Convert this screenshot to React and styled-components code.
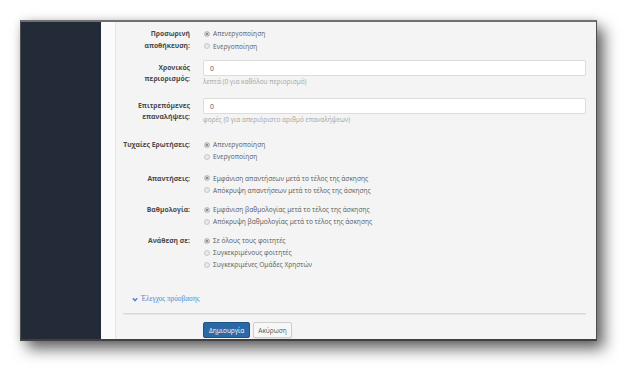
import React from 'react';
import styled, { createGlobalStyle } from 'styled-components';

const GlobalStyle = createGlobalStyle`
  html, body {
    margin: 0;
    padding: 0;
    background: #ffffff;
  }
  body {
    font-family: 'Open Sans', 'Noto Sans', sans-serif;
  }
`;

const Page = styled.div`
  width: 638px;
  height: 382px;
  padding: 20px 0 0 20px;
  box-sizing: border-box;
  overflow: hidden;
`;

const Frame = styled.div`
  width: 577px;
  height: 321px;
  box-sizing: border-box;
  display: flex;
  border: 1px solid #4e4e4e;
  border-top: 2px solid #707070;
  border-bottom: 2px solid #404040;
  box-shadow: 7px 8px 14px rgba(0, 0, 0, 0.6), 0 0 8px rgba(0, 0, 0, 0.12);
  overflow: hidden;
`;

const Sidebar = styled.aside`
  flex: 0 0 80px;
  background: #232b39;
`;

const Gutter = styled.div`
  flex: 0 0 14px;
  background: #fbfbfb;
  border-right: 1px solid #e6e6e6;
`;

const Content = styled.main`
  flex: 1;
  background: #f4f4f4;
  padding: 5.5px 10px 0 0;
  box-sizing: border-box;
`;

const Row = styled.div`
  display: grid;
  grid-template-columns: 74px 1fr;
  column-gap: 13px;
  margin-bottom: ${(p) => p.$gap}px;
`;

const Label = styled.div`
  text-align: right;
  font-weight: 700;
  font-size: 6.8px;
  line-height: 11.5px;
  color: #4a4a4a;
  padding-top: ${(p) => (p.$input ? 1.5 : 0.5)}px;
`;

const Options = styled.div`
  display: flex;
  flex-direction: column;
`;

const Option = styled.label`
  display: flex;
  align-items: center;
  gap: 3.5px;
  height: ${(p) => p.$pitch}px;
  font-size: 6.6px;
  color: #5a5a5a;
  white-space: nowrap;
`;

const Dot = styled.span`
  width: 6px;
  height: 6px;
  box-sizing: border-box;
  border-radius: 50%;
  border: 1px solid #c8c8c8;
  background: ${(p) => (p.$checked ? '#707070' : '#e9e9e9')};
  box-shadow: ${(p) => (p.$checked ? 'inset 0 0 0 1px #e2e2e2' : 'none')};
  margin-left: 0.5px;
`;

const Input = styled.div`
  height: 16px;
  box-sizing: border-box;
  background: #ffffff;
  border: 1px solid #dcdcdc;
  border-radius: 2px;
  padding-left: 6px;
  display: flex;
  align-items: center;
  font-size: 6.8px;
  color: #555;
`;

const Help = styled.div`
  margin-top: 1px;
  font-size: 6.5px;
  line-height: 10px;
  color: #a4a4a4;
  white-space: nowrap;
`;

const Toggle = styled.div`
  display: flex;
  align-items: center;
  gap: 3px;
  margin: 0 0 9px 16px;
  height: 10px;
  font-family: 'Liberation Serif', serif;
  font-size: 7.2px;
  color: #4a8ad2;
`;

const Divider = styled.hr`
  margin: 0 0 7px 7px;
  border: none;
  border-top: 1px solid #d9d9d9;
  border-bottom: 1px solid #e6e6e6;
`;

const Actions = styled.div`
  display: flex;
  gap: 3px;
  padding-left: 87px;
`;

const Button = styled.button`
  height: 16px;
  padding: 0 ${(p) => (p.$primary ? 5 : 4)}px;
  font-family: 'Open Sans', sans-serif;
  font-size: 6.5px;
  border-radius: 2px;
  border: 1px solid ${(p) => (p.$primary ? '#1f5286' : '#cfcfcf')};
  background: ${(p) => (p.$primary ? '#2b69a6' : '#f7f7f7')};
  color: ${(p) => (p.$primary ? '#ffffff' : '#555555')};
  box-shadow: ${(p) => (p.$primary ? 'none' : '0 1px 1px rgba(0,0,0,0.08)')};
`;

const Chevron = () => (
  <svg width="6" height="5" viewBox="0 0 6 5">
    <polyline points="0.8,1.2 3,3.6 5.2,1.2" fill="none" stroke="#4a8ad2" strokeWidth="1.5" />
  </svg>
);

const RadioGroup = ({ items, pitch = 12 }) => (
  <Options>
    {items.map((text, i) => (
      <Option key={text} $pitch={pitch}>
        <Dot $checked={i === 0} />
        {text}
      </Option>
    ))}
  </Options>
);

const radioRows = [
  {
    label: 'Τυχαίες Ερωτήσεις:',
    items: ['Απενεργοποίηση', 'Ενεργοποίηση'],
    gap: 9.5,
  },
  {
    label: 'Απαντήσεις:',
    items: [
      'Εμφάνιση απαντήσεων μετά το τέλος της άσκησης',
      'Απόκρυψη απαντήσεων μετά το τέλος της άσκησης',
    ],
    gap: 7.5,
  },
  {
    label: 'Βαθμολογία:',
    items: [
      'Εμφάνιση βαθμολογίας μετά το τέλος της άσκησης',
      'Απόκρυψη βαθμολογίας μετά το τέλος της άσκησης',
    ],
    gap: 7,
  },
  {
    label: 'Ανάθεση σε:',
    items: ['Σε όλους τους φοιτητές', 'Συγκεκριμένους φοιτητές', 'Συγκεκριμένες Ομάδες Χρηστών'],
    gap: 23.5,
  },
];

const App = () => {
  return (
    <Page>
      <GlobalStyle />
      <Frame>
        <Sidebar />
        <Gutter />
        <Content>
          <Row $gap={7.5}>
            <Label>
              Προσωρινή
              <br />
              αποθήκευση:
            </Label>
            <RadioGroup items={['Απενεργοποίηση', 'Ενεργοποίηση']} pitch={12.5} />
          </Row>
          <Row $gap={11}>
            <Label $input>
              Χρονικός
              <br />
              περιορισμός:
            </Label>
            <div>
              <Input>0</Input>
              <Help>λεπτά (0 για καθόλου περιορισμό)</Help>
            </div>
          </Row>
          <Row $gap={13.5}>
            <Label $input>
              Επιτρεπόμενες
              <br />
              επαναλήψεις:
            </Label>
            <div>
              <Input>0</Input>
              <Help>φορές (0 για απεριόριστο αριθμό επαναλήψεων)</Help>
            </div>
          </Row>
          {radioRows.map((row) => (
            <Row key={row.label} $gap={row.gap}>
              <Label>{row.label}</Label>
              <RadioGroup items={row.items} />
            </Row>
          ))}
          <Toggle>
            <Chevron />
            Έλεγχος πρόσβασης
          </Toggle>
          <Divider />
          <Actions>
            <Button $primary>Δημιουργία</Button>
            <Button>Ακύρωση</Button>
          </Actions>
        </Content>
      </Frame>
    </Page>
  );
};

export default App;
